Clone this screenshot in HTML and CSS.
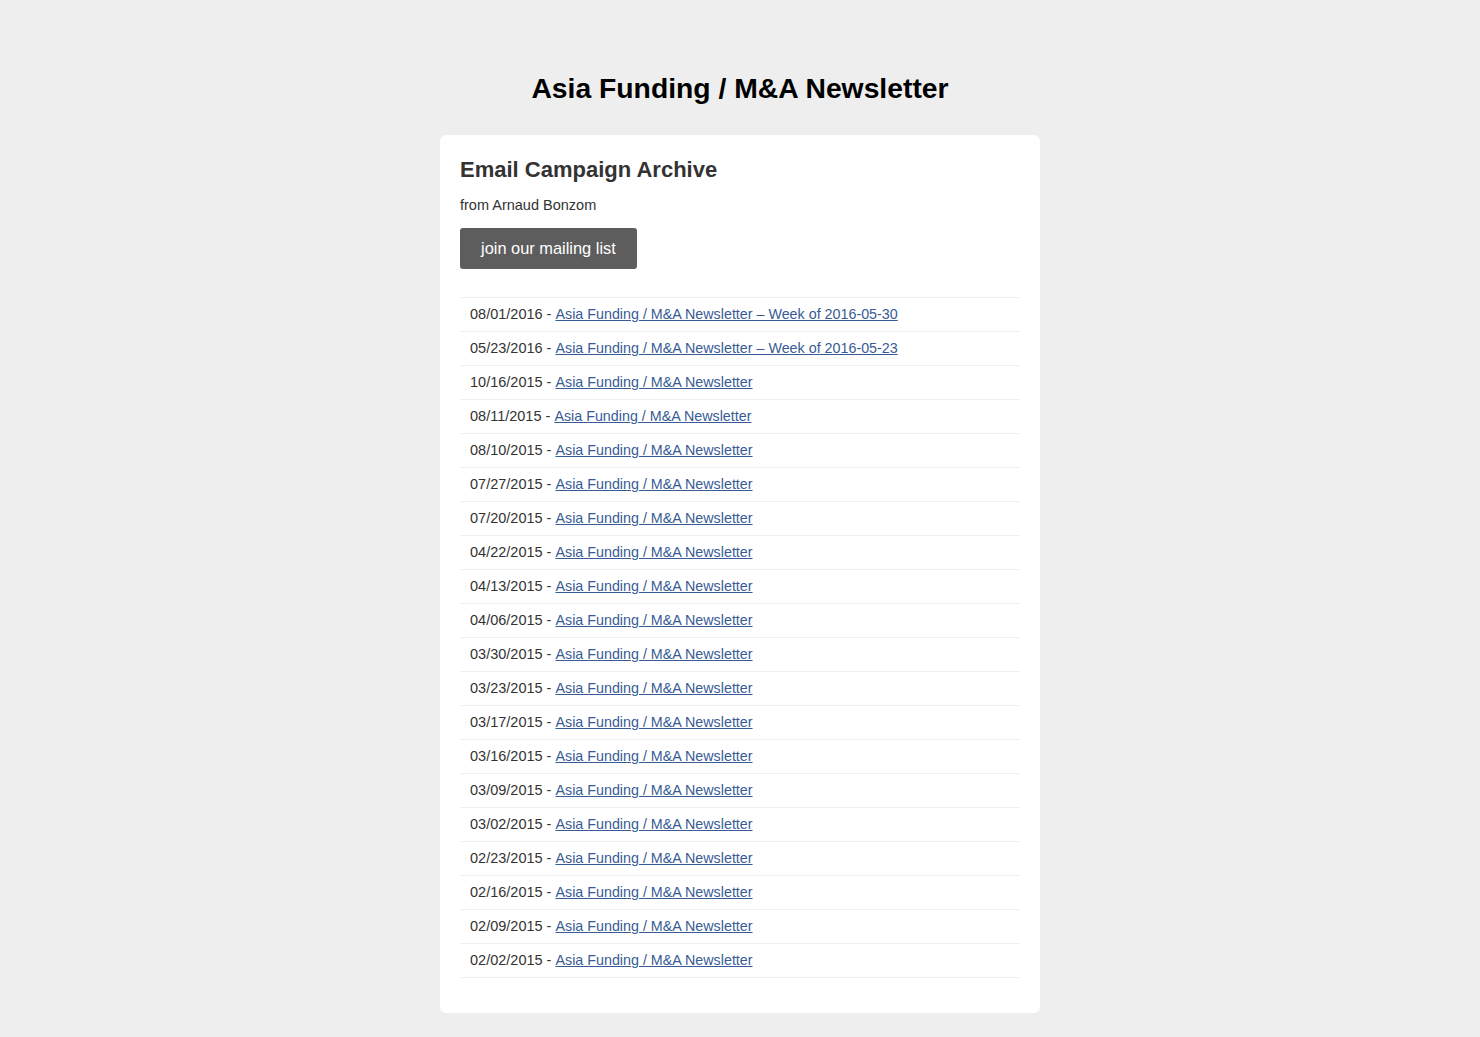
FILE: index.html
```html
<!DOCTYPE html>
<html lang="en">
<head>
  <meta charset="UTF-8">
  <meta name="viewport" content="width=device-width, initial-scale=1.0">
  <title>Asia Funding / M&amp;A Newsletter</title>
  <link rel="stylesheet" href="styles.css">
</head>
<body>
  <h1 class="site-title">Asia Funding / M&amp;A Newsletter</h1>
  <div class="archive">
    <h2 class="archive-title">Email Campaign Archive</h2>
    <p class="archive-from">from Arnaud Bonzom</p>
    <a class="join-button" href="#">join our mailing list</a>

    <ul class="campaigns">
      <li>08/01/2016 - <a href="#">Asia Funding / M&amp;A Newsletter – Week of 2016-05-30</a></li>
      <li>05/23/2016 - <a href="#">Asia Funding / M&amp;A Newsletter – Week of 2016-05-23</a></li>
      <li>10/16/2015 - <a href="#">Asia Funding / M&amp;A Newsletter</a></li>
      <li>08/11/2015 - <a href="#">Asia Funding / M&amp;A Newsletter</a></li>
      <li>08/10/2015 - <a href="#">Asia Funding / M&amp;A Newsletter</a></li>
      <li>07/27/2015 - <a href="#">Asia Funding / M&amp;A Newsletter</a></li>
      <li>07/20/2015 - <a href="#">Asia Funding / M&amp;A Newsletter</a></li>
      <li>04/22/2015 - <a href="#">Asia Funding / M&amp;A Newsletter</a></li>
      <li>04/13/2015 - <a href="#">Asia Funding / M&amp;A Newsletter</a></li>
      <li>04/06/2015 - <a href="#">Asia Funding / M&amp;A Newsletter</a></li>
      <li>03/30/2015 - <a href="#">Asia Funding / M&amp;A Newsletter</a></li>
      <li>03/23/2015 - <a href="#">Asia Funding / M&amp;A Newsletter</a></li>
      <li>03/17/2015 - <a href="#">Asia Funding / M&amp;A Newsletter</a></li>
      <li>03/16/2015 - <a href="#">Asia Funding / M&amp;A Newsletter</a></li>
      <li>03/09/2015 - <a href="#">Asia Funding / M&amp;A Newsletter</a></li>
      <li>03/02/2015 - <a href="#">Asia Funding / M&amp;A Newsletter</a></li>
      <li>02/23/2015 - <a href="#">Asia Funding / M&amp;A Newsletter</a></li>
      <li>02/16/2015 - <a href="#">Asia Funding / M&amp;A Newsletter</a></li>
      <li>02/09/2015 - <a href="#">Asia Funding / M&amp;A Newsletter</a></li>
      <li>02/02/2015 - <a href="#">Asia Funding / M&amp;A Newsletter</a></li>
    </ul>
  </div>
</body>
</html>
```

FILE: styles.css
```css
body {
  margin: 0;
  padding: 0 0 24px;
  background-color: #eeeeee;
  font-family: "Liberation Sans", Arial, sans-serif;
  color: #333;
}
.site-title {
  margin: 0;
  padding: 71px 0 30px;
  font-size: 28.3px;
  line-height: 34px;
  text-align: center;
  color: #000;
}
.archive {
  width: 560px;
  margin: 0 auto;
  padding: 21px 20px 35px;
  background-color: #fff;
  border-radius: 6px;
}
.archive-title {
  margin: 0;
  font-size: 22px;
  line-height: 28px;
  color: #333;
}
.archive-from {
  margin: 13px 0 15px;
  font-size: 14.5px;
  line-height: 16px;
}
.join-button {
  display: inline-block;
  padding: 11px 21px 12px;
  background-color: #5d5d5d;
  color: #fff;
  font-size: 16.4px;
  line-height: 18px;
  text-decoration: none;
  border-radius: 3px;
}
.campaigns {
  list-style: none;
  margin: 28px 0 0;
  padding: 0;
  border-top: 1px solid #eee;
}
.campaigns li {
  padding: 8px 10px;
  font-size: 14.5px;
  line-height: 17px;
  border-bottom: 1px solid #eee;
}
.campaigns a {
  color: #385b95;
  font-size: 14.3px;
}
```
